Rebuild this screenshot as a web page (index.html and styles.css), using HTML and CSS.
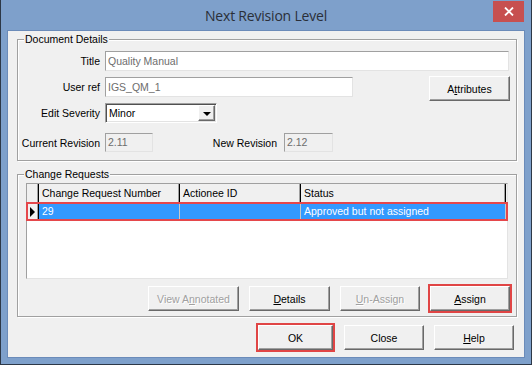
FILE: index.html
```html
<!DOCTYPE html>
<html lang="en">
<head>
    <meta charset="UTF-8">
    <title>Next Revision Level</title>
    <link rel="stylesheet" href="styles.css">
</head>
<body>

    <div class="window">
        <div class="titlebar">
            <span></span>
            <h1 class="title">Next Revision Level</h1>
            <div class="close-cell">
                <button class="close">
                    <svg width="10" height="9" viewBox="0 0 10 9">
                        <path d="M1 0.5 L9 8.5 M9 0.5 L1 8.5" stroke="#fff" stroke-width="1.8" fill="none"/>
                    </svg>
                </button>
            </div>
        </div>

        <div class="client">
            <fieldset class="group details">
                <legend>Document Details</legend>
                <div class="row r-title">
                    <label class="lbl">Title</label>
                    <div class="field wide">Quality Manual</div>
                </div>
                <div class="row r-ref">
                    <label class="lbl">User ref</label>
                    <div class="field mid">IGS_QM_1</div>
                    <button class="btn attr">A<u>t</u>tributes</button>
                </div>
                <div class="row r-sev">
                    <label class="lbl">Edit Severity</label>
                    <div class="combo">
                        <span class="combo-text">Minor</span>
                        <span class="drop"><i class="arrow"></i></span>
                    </div>
                </div>
                <div class="row r-rev">
                    <label class="lbl">Current Revision</label>
                    <div class="field small ro">2.11</div>
                    <label class="lbl-new">New Revision</label>
                    <div class="field small ro">2.12</div>
                </div>
            </fieldset>

            <fieldset class="group requests">
                <legend>Change Requests</legend>
                <div class="grid">
                    <div class="grid-head">
                        <div class="cell ind"></div>
                        <div class="cell">Change Request Number</div>
                        <div class="cell">Actionee ID</div>
                        <div class="cell">Status</div>
                    </div>
                    <div class="grid-row selected">
                        <div class="cell ind"><i class="pointer"></i></div>
                        <div class="cell">29</div>
                        <div class="cell"></div>
                        <div class="cell">Approved but not assigned</div>
                    </div>
                </div>
                <div class="actions">
                    <button class="btn w-view" disabled>View A<u>n</u>notated</button>
                    <button class="btn w-details"><u>D</u>etails</button>
                    <button class="btn w-unassign" disabled><u>U</u>n-Assign</button>
                    <button class="btn w-assign marked"><u>A</u>ssign</button>
                </div>
            </fieldset>

            <div class="footer">
                <button class="btn w-ok marked">OK</button>
                <button class="btn w-close">Close</button>
                <button class="btn w-help"><u>H</u>elp</button>
            </div>
        </div>
    </div>

</body>
</html>
```

FILE: styles.css
```css
* {
    box-sizing: border-box;
}

body {
    margin: 0;
    background-color: #fff;
    font-family: "Liberation Sans", Arial, sans-serif;
    font-size: 10.5px;
    color: #000;
}

.window {
    width: 532px;
    height: 365px;
    background-color: #7ea0cb;
    border: 1px solid #2d3847;
    border-top: none;
    padding: 0 7px 7px 7px;
    display: flex;
    flex-direction: column;
}

.titlebar {
    height: 31px;
    display: grid;
    grid-template-columns: 1fr auto 1fr;
}

.title {
    margin: 0;
    font-family: "Open Sans", "Noto Sans", sans-serif;
    font-size: 14px;
    font-weight: normal;
    letter-spacing: -0.2px;
    line-height: 31px;
    color: #2a2f38;
}

.close-cell {
    display: flex;
    justify-content: flex-end;
    align-items: flex-start;
}

.close {
    margin-top: 1px;
    width: 31px;
    height: 21px;
    border: none;
    padding: 0;
    background-color: #c75050;
    display: flex;
    justify-content: center;
    align-items: center;
}

.client {
    flex: 1;
    background-color: #f0f0f0;
    box-shadow: 0 0 0 1px #6b8bb9;
    display: flex;
    flex-direction: column;
}

/* group boxes */
.group {
    margin: 0 0 0 9px;
    width: 500px;
    border: 1px solid #a0a0a0;
    box-shadow: inset 1px 1px #fff, 1px 1px #fff;
    padding: 0 6px 8px 0;
    min-inline-size: 0;
}

.group legend {
    margin-left: 6px;
    padding: 0 1px;
    line-height: 13px;
    background-color: #f0f0f0;
}

.details {
    margin-top: 2px;
    padding-top: 5px;
}

.requests {
    margin-top: 7px;
    padding-top: 2px;
    padding-bottom: 5px;
}

.row {
    display: flex;
    align-items: center;
}

.lbl {
    width: 82px;
    margin-right: 5px;
    text-align: right;
    white-space: nowrap;
}

.r-title { height: 20px; }

.r-ref {
    margin-top: 5px;
    height: 25px;
    align-items: flex-start;
}

.r-ref .lbl {
    line-height: 22px;
}

.r-sev {
    margin-top: 2px;
    height: 20px;
}

.r-rev {
    margin-top: 10px;
    height: 19px;
}

/* text boxes */
.field {
    height: 20px;
    line-height: 18px;
    padding-left: 2px;
    background-color: #fff;
    color: #6d6d6d;
    border: 1px solid;
    border-color: #a0a0a0 #e3e3e3 #e3e3e3 #a0a0a0;
    white-space: nowrap;
}

.wide { width: 404px; }

.mid {
    width: 248px;
    margin-top: 1px;
}

.small {
    width: 48px;
    height: 19px;
    line-height: 17px;
}

.ro {
    background-color: #f0f0f0;
}

.lbl-new {
    width: 124px;
    margin-right: 7px;
    text-align: right;
}

.r-rev .small:last-child { width: 49px; }

/* combo box */
.combo {
    width: 112px;
    height: 20px;
    background-color: #fff;
    border: 1px solid;
    border-color: #a0a0a0 #fff #fff #a0a0a0;
    box-shadow: inset 1px 1px #505050, inset -1px -1px #e3e3e3;
    display: flex;
    align-items: center;
    padding: 1px 1px 1px 3px;
}

.combo-text {
    flex: 1;
}

.drop {
    width: 17px;
    height: 16px;
    background-color: #f0f0f0;
    border: 1px solid;
    border-color: #fff #696969 #696969 #fff;
    box-shadow: inset -1px -1px #a0a0a0;
    display: flex;
    justify-content: center;
    align-items: center;
}

.arrow {
    width: 0;
    height: 0;
    border-left: 4px solid transparent;
    border-right: 4px solid transparent;
    border-top: 4px solid #000;
    margin-top: 1px;
}

/* buttons */
.btn {
    height: 25px;
    padding: 0;
    font-family: "Liberation Sans", Arial, sans-serif;
    font-size: 10.5px;
    color: #000;
    background-color: #f0f0f0;
    border: 1px solid;
    border-color: #fff #696969 #696969 #fff;
    box-shadow: inset -1px -1px #a0a0a0;
}

.btn:disabled {
    color: #a0a0a0;
    text-shadow: 1px 1px #fff;
}

.attr {
    width: 81px;
    margin-left: auto;
}

.marked {
    outline: 2px solid #e04545;
}

/* grid */
.grid {
    margin-left: 8px;
    margin-top: 0;
    width: 482px;
    height: 96px;
    background-color: #fff;
    border: 1px solid;
    border-color: #a0a0a0 #e3e3e3 #e3e3e3 #a0a0a0;
}

.grid-head,
.grid-row {
    display: grid;
    grid-template-columns: 12px 141px 121px 205px 1fr;
}

.grid-head {
    height: 19px;
    background-color: #f0f0f0;
    border-bottom: 1px solid #a0a0a0;
}

.grid-head .cell {
    line-height: 18px;
    padding-left: 3px;
    box-shadow: inset -1px 0 #000, inset -2px 0 #a0a0a0;
}

.grid-row {
    height: 17px;
}

.grid-row .cell {
    line-height: 17px;
    padding-left: 3px;
    box-shadow: inset -1px 0 #c8c8c8;
}

.selected {
    background-color: #3399ff;
    color: #fff;
    outline: 2px solid #e5474b;
    outline-offset: -1px;
}

.grid-row .ind {
    background-color: #f0f0f0;
    box-shadow: inset -1px 0 #000, inset -2px 0 #a0a0a0;
    display: flex;
    align-items: center;
    padding-left: 3px;
}

.pointer {
    width: 0;
    height: 0;
    border-top: 5px solid transparent;
    border-bottom: 5px solid transparent;
    border-left: 5px solid #000;
}

/* button rows */
.actions {
    margin-top: 7px;
    display: flex;
    justify-content: flex-end;
    gap: 10px;
}

.w-view { width: 91px; }
.w-details { width: 81px; }
.w-unassign { width: 80px; }
.w-assign { width: 80px; }

.footer {
    margin-top: 8px;
    padding-right: 10px;
    display: flex;
    justify-content: flex-end;
    gap: 10px;
}

.w-ok {
    width: 75px;
    margin-right: 1px;
}

.w-close,
.w-help {
    width: 80px;
}
```
